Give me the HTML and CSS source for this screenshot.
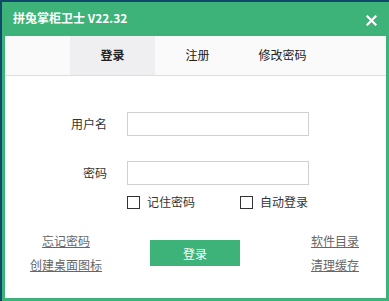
FILE: index.html
```html
<!DOCTYPE html>
<html lang="zh">
<head>
  <meta charset="UTF-8">
  <title>拼兔掌柜卫士</title>
  <link rel="stylesheet" href="styles.css">
</head>
<body>
  <div class="window">
    <div class="titlebar">
      <span class="title">拼兔掌柜卫士 V22.32</span>
      <svg class="close" width="11" height="11" viewBox="0 0 11 11">
        <path d="M1.5 1.5 L9.5 9.5 M9.5 1.5 L1.5 9.5" stroke="#fff" stroke-width="2.2" stroke-linecap="square"/>
      </svg>
    </div>
    <div class="tabs">
      <div class="tab active">登录</div>
      <div class="tab">注册</div>
      <div class="tab">修改密码</div>
    </div>
    <div class="form">
      <div class="row">
        <label class="label">用户名</label>
        <input class="field" type="text">
      </div>
      <div class="row">
        <label class="label">密码</label>
        <input class="field" type="password">
      </div>
      <div class="checks">
        <span class="check"><span class="box"></span>记住密码</span>
        <span class="check"><span class="box"></span>自动登录</span>
      </div>
    </div>
    <div class="actions">
      <div class="links left">
        <a href="#">忘记密码</a>
        <a href="#">创建桌面图标</a>
      </div>
      <button class="login">登录</button>
      <div class="links right">
        <a href="#">软件目录</a>
        <a href="#">清理缓存</a>
      </div>
    </div>
  </div>
</body>
</html>
```

FILE: styles.css
```css
body {
  margin: 0;
  padding: 2px 0 0 2px;
  background: #0f4a6b;
  font-family: "Noto Sans CJK SC", "Noto Sans", sans-serif;
  font-size: 12px;
  color: #333;
}

.window {
  width: 381px;
  height: 296px;
  background: #fff;
  border: 3px solid #3db37a;
  border-top: 0;
}

.titlebar {
  height: 34px;
  background: #3db37a;
  margin: 0 -3px;
  padding: 0 12px 0 11px;
  display: flex;
  align-items: center;
  justify-content: space-between;
}

.title {
  color: #fff;
  font-weight: bold;
  font-size: 12px;
  line-height: 14px;
  margin-top: -2px;
}

.close {
  margin-top: 2px;
}

.tabs {
  height: 39px;
  background: #fafafb;
  border-bottom: 1px solid #dedede;
  display: flex;
  padding-left: 65px;
}

.tab {
  width: 85px;
  display: flex;
  align-items: center;
  justify-content: center;
  color: #222;
  line-height: 14px;
  padding-bottom: 2px;
}

.tab.active {
  background: #efeff1;
  font-weight: bold;
}

.form {
  padding-top: 36px;
}

.row {
  display: flex;
  align-items: center;
  margin-bottom: 25px;
}

.row:nth-child(2) {
  margin-bottom: 10px;
}

.label {
  width: 102px;
  text-align: right;
  margin-right: 20px;
  line-height: 14px;
}

.field {
  width: 180px;
  height: 22px;
  padding: 0;
  margin: 0;
  border: 1px solid #d0d0d0;
  box-sizing: content-box;
}

.checks {
  display: flex;
  padding-left: 122px;
  height: 14px;
  align-items: center;
}

.check {
  display: flex;
  align-items: center;
  line-height: 14px;
  width: 113px;
}

.box {
  width: 11px;
  height: 11px;
  border: 1px solid #333;
  margin-right: 7px;
}

.actions {
  display: flex;
  align-items: center;
  margin-top: 25px;
}

.links {
  display: flex;
  flex-direction: column;
  align-items: center;
  gap: 10px;
}

.links a {
  color: #666;
  text-decoration: underline;
  line-height: 14px;
}

.left {
  width: 92px;
  margin-left: 15px;
}

.right {
  width: 70px;
  margin-left: 60px;
}

.login {
  width: 90px;
  height: 26px;
  margin-left: 38px;
  border: 0;
  background: #3db37a;
  color: #fff;
  font-family: inherit;
  font-size: 12px;
  padding: 0;
}
```
